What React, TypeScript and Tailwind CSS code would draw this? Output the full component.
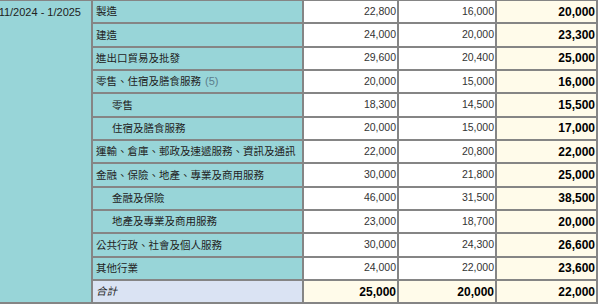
import React from "react";

type Row = {
  label: string;
  note?: string;
  sub?: boolean;
  a: string;
  b: string;
  c: string;
};

const rows: Row[] = [
  { label: "製造", a: "22,800", b: "16,000", c: "20,000" },
  { label: "建造", a: "24,000", b: "20,000", c: "23,300" },
  { label: "進出口貿易及批發", a: "29,600", b: "20,400", c: "25,000" },
  { label: "零售、住宿及膳食服務", note: "(5)", a: "20,000", b: "15,000", c: "16,000" },
  { label: "零售", sub: true, a: "18,300", b: "14,500", c: "15,500" },
  { label: "住宿及膳食服務", sub: true, a: "20,000", b: "15,000", c: "17,000" },
  { label: "運輸、倉庫、郵政及速遞服務、資訊及通訊", a: "22,000", b: "20,800", c: "22,000" },
  { label: "金融、保險、地產、專業及商用服務", a: "30,000", b: "21,800", c: "25,000" },
  { label: "金融及保險", sub: true, a: "46,000", b: "31,500", c: "38,500" },
  { label: "地產及專業及商用服務", sub: true, a: "23,000", b: "18,700", c: "20,000" },
  { label: "公共行政、社會及個人服務", a: "30,000", b: "24,300", c: "26,600" },
  { label: "其他行業", a: "24,000", b: "22,000", c: "23,600" },
];

const cjk = { fontFamily: '"Liberation Sans", "Noto Sans CJK TC", sans-serif' };

export default function App() {
  return (
    <div className="h-[304px] w-[600px] overflow-hidden bg-white" style={cjk}>
      <table className="-ml-[10px] -mt-px table-fixed border-collapse text-[#222]">
        <colgroup>
          <col className="w-[101px]" />
          <col className="w-[211px]" />
          <col className="w-[95px]" />
          <col className="w-[98px]" />
          <col className="w-[101px]" />
        </colgroup>
        <tbody>
          {rows.map((r, i) => (
            <tr key={r.label} className="h-[23.33px]">
              {i === 0 && (
                <td
                  rowSpan={rows.length + 1}
                  className="border-2 border-[#858585] bg-[#98d5d8] pt-[3px] pr-[10px] text-right align-top whitespace-nowrap text-[11px]"
                >
                  11/2024 - 1/2025
                </td>
              )}
              <td
                className={`border-2 border-[#858585] bg-[#98d5d8] whitespace-nowrap text-[10.5px] leading-none ${
                  r.sub ? "pl-[19px]" : "pl-[3px]"
                }`}
              >
                {r.label}
                {r.note && <span className="ml-1 text-[#5b7d8c] text-[11px]">{r.note}</span>}
              </td>
              <td className="border-2 border-[#858585] bg-white pr-[1px] text-right text-[10.5px] text-[#333]">
                {r.a}
              </td>
              <td className="border-2 border-[#858585] bg-white pr-[1px] text-right text-[10.5px] text-[#333]">
                {r.b}
              </td>
              <td className="border-2 border-[#858585] bg-[#fffbea] pr-[1px] text-right text-[12px] font-bold text-black">
                {r.c}
              </td>
            </tr>
          ))}
          <tr className="h-[23.33px]">
            <td className="border-2 border-[#858585] bg-[#dae3f3] pl-[3px] text-[10.5px] italic">合計</td>
            <td className="border-2 border-[#858585] bg-[#fffbea] pr-[1px] text-right text-[12px] font-bold text-black">
              25,000
            </td>
            <td className="border-2 border-[#858585] bg-[#fffbea] pr-[1px] text-right text-[12px] font-bold text-black">
              20,000
            </td>
            <td className="border-2 border-[#858585] bg-[#fffbea] pr-[1px] text-right text-[12px] font-bold text-black">
              22,000
            </td>
          </tr>
        </tbody>
      </table>
    </div>
  );
}
